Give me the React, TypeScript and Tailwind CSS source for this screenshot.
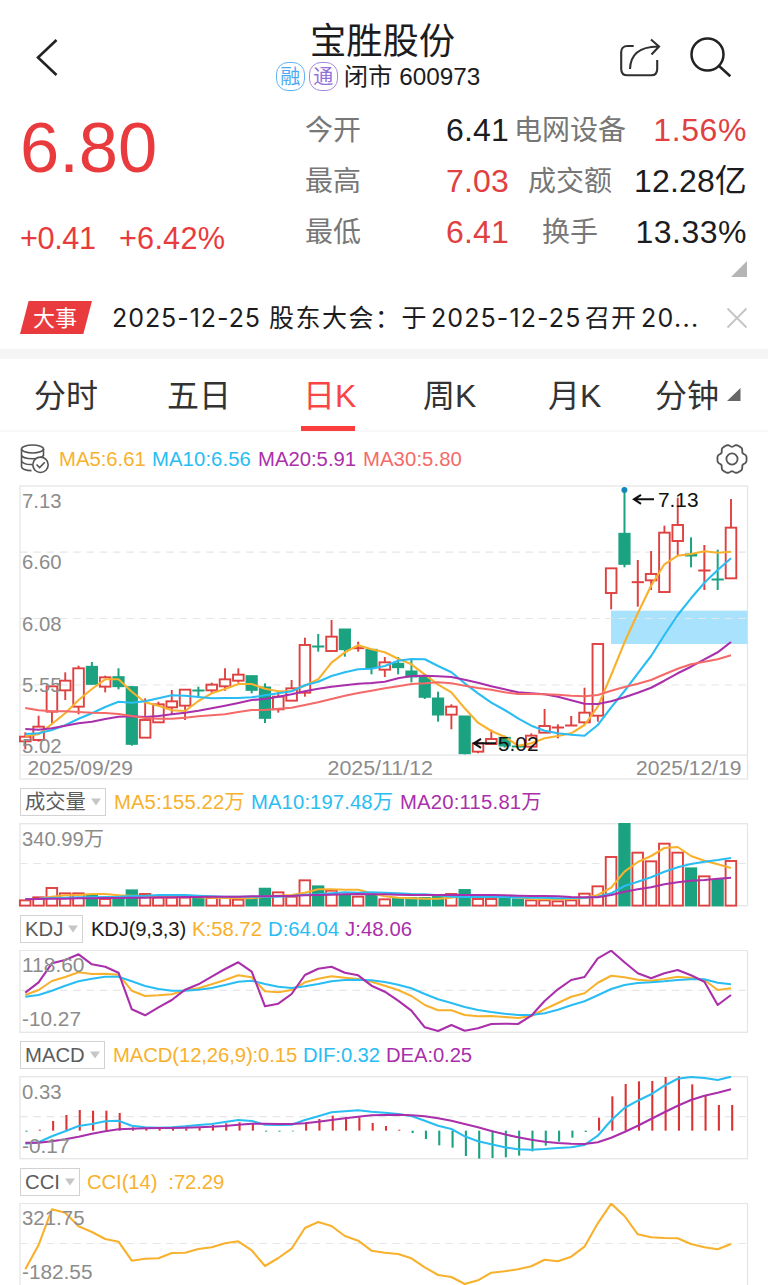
import React from "react";

const RED = "#df4040";
const GREEN = "#1aa281";
const ORANGE = "#f8b12c";
const BLUE = "#29bdf3";
const PURPLE = "#aa2fab";
const PINK = "#f46a68";
const LABEL = "#8c8c8c";

const CJK = "font-['Liberation_Sans','Noto_Sans_CJK_SC',sans-serif]";

/** x of the n-th trading day */
const xAt = (i: number) => 25.3 + 13.315 * i;

type Candle = [number, number, number, number, "r" | "g"];

/** high, body top, body bottom, low in thirds of a pixel below y = 480 */
const CANDLES: Candle[] = [
  [757, 770, 784, 808, "r"], [707, 740, 780, 785, "r"], [619, 619, 695, 730, "r"], [577, 602, 631, 660, "r"],
  [557, 565, 680, 703, "r"], [546, 559, 613, 613, "g"], [587, 592, 620, 637, "r"], [565, 590, 620, 628, "g"],
  [618, 620, 793, 797, "g"], [655, 720, 773, 773, "r"], [665, 673, 727, 727, "r"], [630, 664, 682, 702, "r"],
  [627, 629, 677, 720, "r"], [620, 630, 633, 650, "g"], [608, 614, 631, 642, "r"], [565, 598, 619, 632, "r"],
  [565, 584, 602, 608, "r"], [587, 587, 631, 640, "g"], [610, 621, 715, 729, "g"], [635, 650, 688, 698, "r"],
  [600, 625, 662, 662, "r"], [473, 495, 638, 650, "r"], [462, 498, 501, 515, "g"], [420, 470, 513, 515, "r"],
  [447, 447, 509, 530, "g"], [485, 503, 506, 515, "r"], [508, 508, 563, 583, "g"], [531, 547, 569, 591, "r"],
  [531, 550, 563, 583, "g"], [538, 573, 591, 607, "g"], [587, 587, 652, 657, "g"], [635, 654, 705, 725, "g"],
  [673, 680, 704, 748, "r"], [708, 708, 821, 823, "g"], [788, 790, 815, 820, "r"], [749, 777, 792, 792, "r"],
  [767, 772, 798, 803, "g"], [795, 798, 801, 805, "g"], [760, 767, 800, 808, "r"], [687, 738, 758, 758, "r"],
  [733, 741, 744, 775, "r"], [708, 735, 738, 738, "r"], [623, 698, 727, 733, "r"], [492, 492, 707, 725, "r"],
  [264, 265, 339, 388, "r"], [30, 160, 253, 262, "g"], [240, 305, 308, 380, "r"], [213, 282, 301, 330, "r"],
  [137, 158, 336, 336, "r"], [53, 135, 183, 225, "r"], [172, 222, 228, 262, "g"], [195, 270, 273, 330, "r"],
  [209, 297, 300, 330, "g"], [57, 143, 295, 295, "r"],
];

const MA5 = [768, 763, 732, 700, 660, 627, 598, 598, 635, 667, 677, 691, 693, 663, 640, 627, 612, 612, 626, 634, 633, 617, 598, 548, 517, 496, 508, 517, 536, 553, 584, 614, 637, 685, 728, 753, 770, 797, 790, 775, 768, 760, 735, 680, 585, 487, 400, 317, 253, 227, 222, 214, 218, 215];
const MA10 = [762, 760, 750, 736, 716, 700, 681, 665, 668, 664, 655, 646, 647, 651, 655, 654, 654, 652, 646, 640, 634, 616, 605, 588, 577, 568, 566, 558, 542, 537, 538, 558, 577, 610, 640, 668, 690, 715, 737, 752, 760, 764, 767, 735, 682, 633, 580, 528, 465, 405, 355, 308, 270, 235];
const MA20 = [747, 749, 745, 737, 730, 725, 717, 710, 709, 711, 708, 703, 698, 692, 685, 677, 669, 660, 657, 650, 643, 634, 626, 620, 616, 611, 609, 605, 595, 588, 587, 589, 591, 599, 608, 619, 628, 637, 640, 643, 650, 661, 671, 672, 664, 652, 638, 623, 602, 580, 560, 538, 517, 486];
const MA30 = [684, 691, 694, 694, 696, 698, 699, 702, 708, 714, 716, 716, 713, 709, 706, 703, 696, 690, 690, 686, 683, 675, 667, 657, 647, 639, 632, 625, 619, 612, 610, 607, 610, 617, 624, 629, 637, 642, 642, 643, 644, 647, 649, 645, 632, 621, 611, 600, 583, 566, 553, 545, 538, 526];

/** bar tops in thirds of a pixel below y = 780 */
const VOLUME = [361, 352, 324, 340, 340, 345, 357, 355, 330, 342, 353, 353, 353, 354, 354, 353, 359, 354, 325, 337, 350, 301, 318, 332, 345, 350, 346, 358, 353, 353, 353, 350, 342, 329, 357, 357, 353, 357, 361, 361, 364, 361, 341, 319, 231, 130, 218, 244, 191, 218, 264, 289, 299, 243];
const VOLUME_DIR = "rrrrrgrggrrrrgrrrggrrrgrgrgrggggrgrrggrrrrrrrgrrrrgrgr";
const V5 = [358, 357, 350, 346, 345, 342, 342, 346, 347, 348, 347, 348, 350, 352, 353, 354, 355, 355, 350, 347, 345, 338, 328, 328, 329, 329, 340, 349, 353, 355, 356, 356, 353, 346, 346, 347, 348, 352, 357, 358, 358, 357, 354, 345, 323, 275, 246, 228, 204, 201, 228, 242, 253, 264];
const V10 = [357, 356, 354, 353, 352, 352, 351, 350, 348, 347, 345, 345, 345, 347, 349, 350, 350, 350, 350, 350, 348, 344, 343, 340, 337, 338, 337, 338, 340, 342, 343, 346, 350, 351, 351, 350, 351, 352, 353, 353, 355, 354, 353, 350, 340, 318, 305, 292, 275, 262, 252, 245, 240, 234];
const V20 = [358, 357, 356, 356, 355, 355, 354, 354, 353, 353, 352, 352, 351, 351, 350, 350, 350, 349, 349, 348, 348, 346, 345, 344, 343, 342, 343, 343, 344, 345, 345, 345, 345, 345, 345, 345, 346, 347, 348, 348, 349, 351, 352, 352, 345, 335, 328, 322, 313, 307, 302, 300, 296, 293];

const J = [638, 607, 550, 540, 523, 553, 560, 578, 688, 706, 682, 660, 629, 613, 590, 567, 547, 575, 679, 671, 642, 585, 566, 560, 578, 586, 617, 635, 662, 692, 742, 753, 735, 752, 745, 732, 731, 732, 707, 663, 628, 600, 591, 535, 512, 547, 580, 595, 580, 570, 586, 605, 675, 645];
const K = [645, 630, 603, 591, 577, 582, 581, 584, 632, 648, 646, 643, 631, 625, 613, 600, 586, 592, 634, 637, 630, 607, 596, 589, 593, 597, 605, 617, 630, 648, 675, 691, 691, 705, 709, 708, 711, 714, 708, 688, 669, 650, 640, 608, 587, 592, 599, 602, 597, 590, 594, 600, 630, 625];
const D = [650, 645, 632, 617, 604, 596, 590, 590, 604, 618, 627, 632, 632, 629, 624, 615, 605, 602, 612, 620, 624, 619, 612, 604, 600, 599, 601, 606, 614, 625, 642, 658, 669, 681, 690, 696, 701, 705, 705, 700, 689, 676, 664, 646, 627, 615, 609, 607, 604, 600, 598, 598, 608, 613];

/** bar ends, in thirds of a pixel below y = 1035; the zero line lies at 287 */
const MACD = [290, 284, 258, 240, 225, 227, 227, 234, 277, 281, 280, 281, 280, 278, 270, 265, 262, 267, 290, 290, 289, 262, 252, 242, 247, 247, 264, 273, 284, 294, 312, 331, 338, 363, 371, 369, 367, 362, 349, 332, 320, 308, 291, 248, 184, 147, 139, 138, 126, 124, 148, 182, 210, 210];
const DIF = [326, 322, 304, 289, 273, 267, 259, 257, 272, 277, 278, 277, 274, 270, 267, 261, 255, 258, 269, 270, 269, 255, 244, 232, 229, 226, 230, 233, 237, 243, 257, 272, 282, 304, 319, 328, 337, 343, 344, 342, 339, 337, 330, 302, 256, 219, 197, 178, 152, 131, 126, 129, 135, 125];
const DEA = [323, 323, 319, 313, 305, 296, 289, 283, 281, 280, 279, 279, 278, 277, 275, 273, 269, 266, 266, 267, 267, 265, 260, 255, 250, 245, 241, 240, 239, 241, 244, 250, 257, 267, 277, 288, 298, 307, 314, 320, 324, 326, 327, 322, 308, 291, 272, 252, 232, 212, 195, 182, 173, 163];
const CCI = [703, 630, 523, 533, 574, 591, 612, 620, 677, 671, 670, 654, 653, 642, 637, 625, 619, 646, 693, 669, 641, 579, 561, 573, 603, 617, 647, 653, 657, 670, 697, 720, 726, 747, 736, 713, 709, 703, 694, 674, 679, 665, 635, 565, 506, 543, 598, 607, 609, 610, 627, 637, 643, 627];

function Line({ data, base, color }: { data: number[]; base: number; color: string }) {
  const points = data.map((v, i) => `${xAt(i).toFixed(1)},${(base + v / 3).toFixed(1)}`).join(" ");
  return <polyline points={points} fill="none" stroke={color} strokeWidth="2.1" strokeLinejoin="round" />;
}

function Dash({ y }: { y: number }) {
  return <line x1="20" x2="747" y1={y} y2={y} stroke="#e6e6e6" strokeWidth="1.2" strokeDasharray="7.5 5.8" />;
}

function Label({ x, y, w, color = LABEL, children }: { x: number; y: number; w: number; color?: string; children: string }) {
  return (
    <text x={x} y={y} textLength={w} lengthAdjust="spacingAndGlyphs" fontSize="20" fill={color}>
      {children}
    </text>
  );
}

function Panel({ top, height, children }: { top: number; height: number; children: React.ReactNode }) {
  return (
    <svg className="block shrink-0" width="768" height={height} viewBox={`0 ${top} 768 ${height}`}>
      {children}
    </svg>
  );
}

function Frame({ y, h }: { y: number; h: number }) {
  return <rect x="20" y={y} width="727.5" height={h} fill="none" stroke="#e6e6e6" strokeWidth="1.3" />;
}

function PriceChart() {
  return (
    <Panel top={485} height={295}>
      <Frame y={486} h={293} />
      <line x1="20" x2="747" y1="755.2" y2="755.2" stroke="#e6e6e6" strokeWidth="1.3" />
      <rect x="611" y="610.7" width="136.5" height="33.3" fill="#a9e2fc" />
      <Dash y={552.2} />
      <Dash y={618.5} />
      <Dash y={685} />
      {CANDLES.map(([hi, top, bottom, lo, dir], i) => {
        const x = xAt(i);
        const y = (v: number) => 480 + v / 3;
        const color = dir === "r" ? RED : GREEN;
        if (dir === "g" || bottom - top < 5) {
          return (
            <g key={i}>
              <line x1={x} x2={x} y1={y(hi)} y2={y(lo)} stroke={color} strokeWidth="2" />
              <rect x={x - 6.1} y={y(top) - 0.5} width="12.2" height={y(bottom) - y(top) + 1} fill={color} />
            </g>
          );
        }
        return (
          <g key={i} stroke={color} strokeWidth="1.9" fill="none">
            <line x1={x} x2={x} y1={y(hi)} y2={y(top)} />
            <line x1={x} x2={x} y1={y(bottom)} y2={y(lo)} />
            <rect x={x - 5.3} y={y(top)} width="10.6" height={y(bottom) - y(top)} />
          </g>
        );
      })}
      <Line data={MA5} base={480} color={ORANGE} />
      <Line data={MA10} base={480} color={BLUE} />
      <Line data={MA20} base={480} color={PURPLE} />
      <Line data={MA30} base={480} color={PINK} />
      <circle cx="624.4" cy="490" r="3" fill="#1687b8" />
      <g stroke="#111" strokeWidth="2.1" fill="none">
        <path d="M654 499.3H634M641 494.8L634 499.3L641 503.8" />
        <path d="M496 743.3H474M481 738.8L474 743.3L481 747.8" />
      </g>
      <Label x={22} y={507.5} w={39.5}>7.13</Label>
      <Label x={22} y={569} w={39.5}>6.60</Label>
      <Label x={22} y={630.5} w={39.5}>6.08</Label>
      <Label x={22} y={691.5} w={39.5}>5.55</Label>
      <Label x={22} y={753} w={39.5}>5.02</Label>
      <Label x={658} y={507} w={40.5} color="#111">7.13</Label>
      <Label x={498} y={750.5} w={40.5} color="#111">5.02</Label>
      <Label x={27.5} y={774.8} w={105.5}>2025/09/29</Label>
      <Label x={327.5} y={774.8} w={105.5}>2025/11/12</Label>
      <Label x={636} y={774.8} w={105.5}>2025/12/19</Label>
    </Panel>
  );
}

function VolumeChart() {
  return (
    <Panel top={823} height={84}>
      <Frame y={823.7} h={82} />
      <Dash y={863.5} />
      {VOLUME.map((v, i) => {
        const x = xAt(i);
        const y = 780 + v / 3;
        return VOLUME_DIR[i] === "g" ? (
          <rect key={i} x={x - 6.2} y={y - 0.6} width="12.3" height={907 - y} fill={GREEN} />
        ) : (
          <rect key={i} x={x - 5.4} y={y} width="10.6" height={905.6 - y} fill="#fff" stroke={RED} strokeWidth="1.9" />
        );
      })}
      <Line data={V5} base={780} color={ORANGE} />
      <Line data={V10} base={780} color={BLUE} />
      <Line data={V20} base={780} color={PURPLE} />
      <Label x={22} y={845.5} w={82}>340.99万</Label>
    </Panel>
  );
}

function KdjChart() {
  return (
    <Panel top={950} height={83}>
      <Frame y={950.3} h={82} />
      <Dash y={990.3} />
      <Line data={K} base={780} color={ORANGE} />
      <Line data={D} base={780} color={BLUE} />
      <Line data={J} base={780} color={PURPLE} />
      <Label x={22} y={971.8} w={62.5}>118.60</Label>
      <Label x={22} y={1026} w={59}>-10.27</Label>
    </Panel>
  );
}

function MacdChart() {
  const zero = 1035 + 287 / 3;
  return (
    <Panel top={1076} height={84}>
      <Frame y={1076.7} h={82} />
      <Dash y={1116.6} />
      {MACD.map((v, i) => (
        <line
          key={i}
          x1={xAt(i) + 1.2}
          x2={xAt(i) + 1.2}
          y1={zero}
          y2={1035 + v / 3}
          stroke={v < 287 ? "#dc3434" : GREEN}
          strokeWidth="2.1"
        />
      ))}
      <Line data={DIF} base={1035} color={BLUE} />
      <Line data={DEA} base={1035} color={PURPLE} />
      <Label x={22} y={1098.5} w={39.5}>0.33</Label>
      <Label x={22} y={1152.5} w={47.5}>-0.17</Label>
    </Panel>
  );
}

function CciChart() {
  return (
    <Panel top={1203} height={82}>
      <Frame y={1203.5} h={100} />
      <Dash y={1243.5} />
      <Line data={CCI} base={1035} color={ORANGE} />
      <Label x={22} y={1225} w={62.5}>321.75</Label>
      <Label x={22} y={1279} w={70.5}>-182.55</Label>
    </Panel>
  );
}

function Selector({ name, width }: { name: string; width: string }) {
  return (
    <div className={`flex h-7 shrink-0 items-center justify-between border border-[#d2d2d2] pr-1 pl-1 text-[20.3px] text-[#5c5c5c] ${width}`}>
      <span className="pt-px leading-none">{name}</span>
      <svg width="10" height="8" viewBox="0 0 10 8">
        <path d="M0 .5H10L5 7.5Z" fill="#c6c6c6" />
      </svg>
    </div>
  );
}

function IndicatorRow({ children }: { children: React.ReactNode }) {
  return <div className="flex h-[43px] shrink-0 items-center pl-5 text-[20.3px] leading-none whitespace-pre">{children}</div>;
}

function Stat({ label, value, valueClass }: { label: string; value: string; valueClass: string }) {
  return (
    <div className="flex h-[51px] items-center">
      <span className="w-[141px] pt-[3px] text-[28px] text-[#777]">{label}</span>
      <span className={`text-[32px] tracking-[0.2px] ${valueClass}`}>{value}</span>
    </div>
  );
}

function StatRight({ label, value, valueClass }: { label: string; value: string; valueClass: string }) {
  return (
    <div className="flex h-[51px] items-center">
      <span className="w-[116px] pt-[3px] text-center text-[28px] whitespace-nowrap text-[#777]">{label}</span>
      <span className={`flex-1 text-right text-[32px] whitespace-nowrap ${valueClass}`}>{value}</span>
    </div>
  );
}

const GEAR_PATH =
  Array.from({ length: 73 }, (_, i) => {
    const a = (i * Math.PI) / 36;
    const r = 13.8 + 1.2 * Math.cos(6 * a) - 0.45 * Math.cos(12 * a);
    return `${i ? "L" : "M"}${(16 + r * Math.cos(a)).toFixed(2)} ${(16 + r * Math.sin(a)).toFixed(2)}`;
  }).join("") + "Z";

export default function App() {
  return (
    <div className={`flex h-[1285px] w-[768px] flex-col overflow-hidden bg-white font-light text-[#1c1c1e] ${CJK}`}>
      <header className="flex h-[104px] shrink-0 items-start pt-5">
        <div className="w-[274px] pt-[18px] pl-9">
          <svg width="22" height="40" viewBox="0 0 22 40" fill="none" stroke="#222" strokeWidth="2.6">
            <path d="M20.5 2L2 19.5L20.5 37" />
          </svg>
        </div>
        <div className="flex w-[208px] flex-col items-center">
          <h1 className="h-[42px] pt-px pl-[9px] text-[36.3px] leading-[41px] font-normal whitespace-nowrap">宝胜股份</h1>
          <div className="flex h-[29px] items-center whitespace-nowrap">
            <span className="flex size-[29px] items-center justify-center rounded-[12px] border-[1.5px] border-[#62b4f4] text-[20px] leading-none font-normal text-[#4fa9f1]">融</span>
            <span className="ml-1 flex size-[29px] items-center justify-center rounded-[12px] border-[1.5px] border-[#a78ae0] text-[20px] leading-none font-normal text-[#9272d8]">通</span>
            <span className="ml-[6px] pt-[2px] text-[24.3px] font-normal">闭市 600973</span>
          </div>
        </div>
        <div className="flex flex-1 items-center pt-[17px] pl-[137px]">
          <svg width="42" height="42" viewBox="0 0 42 42" fill="none" stroke="#303030" strokeWidth="2.1">
            <path d="M14.7 9H8.5C4.5 9 2.2 11.5 2.2 15V32C2.2 36 4.5 38.3 8.5 38.3H32C36 38.3 38.2 36 38.2 32V23" />
            <path d="M11 32C11.5 18 19 9.8 39 9.5M32 2.5L40 9.5L32.5 17.5" />
          </svg>
          <svg className="ml-7" width="44" height="42" viewBox="0 0 44 42" fill="none" stroke="#222" strokeWidth="2.5">
            <circle cx="18.5" cy="17.5" r="16" />
            <path d="M29.8 28.8L41.3 39.2" />
          </svg>
        </div>
      </header>

      <section className="flex h-[182px] shrink-0 font-normal">
        <div className="w-[306px] pl-5 text-[#e93b3d]">
          <div className="h-[112px] pt-2 text-[70.5px] leading-[72px]">6.80</div>
          <div className="flex gap-[23px] text-[30.7px] leading-[46px]">
            <span className="w-[76px] tracking-[-0.4px]">+0.41</span>
            <span className="tracking-[0.2px]">+6.42%</span>
          </div>
        </div>
        <div className="-ml-px w-[207px]">
          <Stat label="今开" value="6.41" valueClass="text-[#1c1c1e]" />
          <Stat label="最高" value="7.03" valueClass="text-[#e04040]" />
          <Stat label="最低" value="6.41" valueClass="text-[#e04040]" />
        </div>
        <div className="flex w-[235px] flex-col">
          <StatRight label="电网设备" value="1.56%" valueClass="text-[#e04040] tracking-[0.6px]" />
          <StatRight label="成交额" value="12.28亿" valueClass="text-[#1c1c1e] tracking-[0.15px]" />
          <StatRight label="换手" value="13.33%" valueClass="text-[#1c1c1e] tracking-[0.5px]" />
          <svg className="mt-1 self-end" width="16" height="16" viewBox="0 0 16 16">
            <path d="M16 0V16H0Z" fill="#b5b5b5" />
          </svg>
        </div>
      </section>

      <section className="flex h-[63px] shrink-0 items-center pl-5">
        <div className="flex h-[33px] w-[72px] items-center justify-center bg-[#e93b3d] pt-px pr-[2px] text-[22px] font-normal text-white [clip-path:polygon(12%_0,100%_0,88%_100%,0_100%)]">
          大事
        </div>
        <p className="ml-5 flex w-[600px] pt-[3px] font-['Inter','Noto_Sans_CJK_SC',sans-serif] text-[25px] font-normal tracking-[0.95px] whitespace-pre">
          <span className="w-[157px]">2025-12-25 </span>
          <span className="w-[162px] tracking-[1.5px]">股东大会：于</span>
          <span className="w-[154px] tracking-[1.1px]">2025-12-25</span>
          <span className="w-[56px]">召开</span>
          <span className="tracking-[1.3px]">20...</span>
        </p>
        <svg className="ml-[14px]" width="22" height="22" viewBox="0 0 22 22" stroke="#c4c4c4" strokeWidth="1.8">
          <path d="M1.5 1.5L20.5 20.5M20.5 1.5L1.5 20.5" />
        </svg>
      </section>

      <div className="h-[10px] shrink-0 bg-[#f5f5f5]" />

      <nav className="flex h-[73px] shrink-0 border-b-2 border-[#f7f7f7] text-[32px] leading-[75px] font-normal whitespace-nowrap text-[#333]">
        <span className="w-[133px] pl-[34px]">分时</span>
        <span className="w-[168px] pl-[34px]">五日</span>
        <span className="h-[72px] w-[54px] border-b-[5px] border-[#fa3e3e] pl-[2px] text-[#fa4545]">日K</span>
        <span className="w-[125px] pl-[68px]">周K</span>
        <span className="w-[120px] pl-[68px]">月K</span>
        <span className="flex pl-[55px]">
          分钟
          <svg className="mt-[29px] ml-2" width="14" height="14" viewBox="0 0 14 14">
            <path d="M13.5 0V13H0Z" fill="#666" />
          </svg>
        </span>
      </nav>

      <div className="flex h-[53px] shrink-0 items-center pl-5 text-[20.3px] leading-none font-normal">
        <svg width="30" height="30" viewBox="0 0 30 30" fill="none" stroke="#555" strokeWidth="1.6">
          <ellipse cx="12.5" cy="5" rx="11" ry="4" />
          <path d="M1.5 5V22.5C1.5 25 6 26.6 11.5 26.6M23.5 5V12M1.5 11C2.5 16 22.5 16 23.5 11M1.5 17C3 20 8 20.7 12.5 20.5" />
          <circle cx="20.5" cy="20.8" r="7.7" fill="#fff" />
          <path d="M16.5 20.5L19.6 23.5L24.8 18.2" />
        </svg>
        <span className="ml-[9px] w-[93px] pt-[2px] text-[#f8b12c]">MA5:6.61</span>
        <span className="w-[106px] pt-[2px] tracking-[0.1px] text-[#29bdf3]">MA10:6.56</span>
        <span className="w-[105px] pt-[2px] text-[#aa2fab]">MA20:5.91</span>
        <span className="pt-[2px] tracking-[0.1px] text-[#f46a68]">MA30:5.80</span>
        <svg className="mr-5 ml-auto" width="32" height="32" viewBox="0 0 32 32" fill="none" stroke="#555" strokeWidth="1.8">
          <path d={GEAR_PATH} />
          <circle cx="16" cy="16" r="5.6" />
        </svg>
      </div>

      <main className="flex flex-col font-normal">
        <PriceChart />
        <IndicatorRow>
          <Selector name="成交量" width="w-[86px]" />
          <span className="ml-2 w-[137px] pt-[2px] tracking-[0.1px] text-[#f8b12c]">MA5:155.22万</span>
          <span className="w-[149px] pt-[2px] tracking-[0.1px] text-[#29bdf3]">MA10:197.48万</span>
          <span className="pt-[2px] tracking-[0.2px] text-[#aa2fab]">MA20:115.81万</span>
        </IndicatorRow>
        <VolumeChart />
        <IndicatorRow>
          <Selector name="KDJ" width="w-[63px]" />
          <span className="ml-2 w-[101px] pt-px tracking-[-0.2px] text-[#1c1c1e]">KDJ(9,3,3)</span>
          <span className="w-[76px] pt-px text-[#f8b12c]">K:58.72</span>
          <span className="w-[77px] pt-px text-[#29bdf3]">D:64.04</span>
          <span className="pt-px tracking-[0.1px] text-[#aa2fab]">J:48.06</span>
        </IndicatorRow>
        <KdjChart />
        <IndicatorRow>
          <Selector name="MACD" width="w-[85px]" />
          <span className="ml-[8px] w-[190px] pt-[2px] tracking-[-0.1px] text-[#f8b12c]">MACD(12,26,9):0.15</span>
          <span className="w-[83px] pt-[2px] tracking-[-0.1px] text-[#29bdf3]">DIF:0.32</span>
          <span className="pt-[2px] tracking-[-0.1px] text-[#aa2fab]">DEA:0.25</span>
        </IndicatorRow>
        <MacdChart />
        <IndicatorRow>
          <Selector name="CCI" width="w-[60px]" />
          <span className="ml-[7px] pt-px tracking-[-0.1px] text-[#f8b12c]">{"CCI(14)  :72.29"}</span>
        </IndicatorRow>
        <CciChart />
      </main>
    </div>
  );
}
